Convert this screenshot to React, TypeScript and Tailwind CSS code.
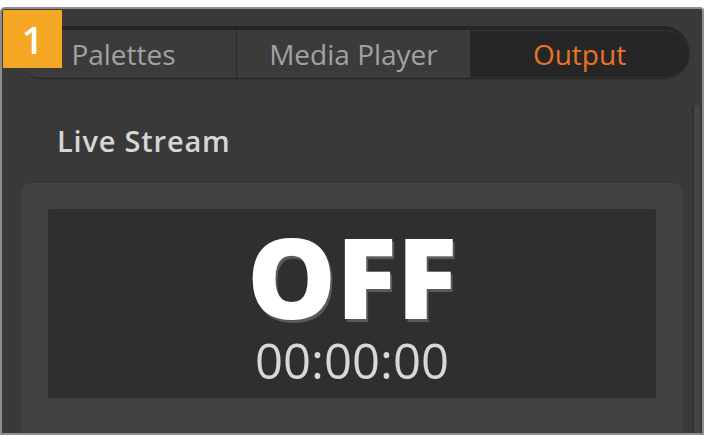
export default function App() {
  const font = { fontFamily: '"Open Sans", "Noto Sans", sans-serif' };

  return (
    <div className="w-[704px] h-[437px] bg-white pt-[7px]" style={font}>
      {/* Window */}
      <div className="relative w-[704px] h-[428px] border-2 border-[#8e8e8e] rounded-tl-[5px] rounded-tr-[4px] bg-[#393939] overflow-hidden flex flex-col">
        {/* Step badge */}
        <div className="absolute left-[1px] top-[1px] w-[59px] h-[58px] bg-[#f5a623] flex items-center justify-center z-10">
          <span className="text-white text-[38px] leading-none font-semibold">1</span>
        </div>

        {/* Tab bar */}
        <div className="mt-[17px] ml-[15px] w-[673px] h-[53px] rounded-full bg-[#252525] pt-[4px] pb-[1px] flex shadow-[0_1px_0_#333]">
          <div className="w-[219px] rounded-l-full bg-[#3b3b3b] flex items-center justify-center text-[28px] text-[#a2a2a2] leading-none">
            <span className="pr-[6px]">Palettes</span>
          </div>
          <div className="w-[234px] border-l border-[#2a2a2a] bg-[#3b3b3b] flex items-center justify-center text-[28px] text-[#a2a2a2] leading-none">
            Media Player
          </div>
          <div className="flex-1 rounded-r-full bg-[#262626] border border-l-0 border-[#333333] flex items-center justify-center text-[28px] text-[#e8722a] leading-none">
            Output
          </div>
        </div>

        <div className="flex flex-1">
          {/* Main content */}
          <div className="flex-1 flex flex-col">
            <div className="mt-[48px] ml-[55px] text-[29px] leading-[28px] font-semibold tracking-[0.8px] text-[#d6d6d6]">
              Live Stream
            </div>

            <div className="mt-[27px] ml-[18px] w-[664px] flex-1 rounded-t-[8px] bg-[#414141] border border-b-0 border-[#363636] pt-[26px] px-[27px]">
              <div className="h-[189px] rounded-[3px] bg-[#2f2f2f] flex flex-col items-center pt-[22px]">
                <div className="text-[112px] leading-[90px] font-extrabold text-white [text-shadow:2px_3px_0_#5a5a5a]">
                  OFF
                </div>
                <div className="mt-[15px] text-[49px] leading-none font-normal text-[#d8d8d8]">
                  00:00:00
                </div>
              </div>
            </div>
          </div>

          {/* Scrollbar strip */}
          <div className="w-[14px] flex pl-[4px] pr-[2px] pt-[26px]">
            <div className="flex-1 rounded-t-[3px] bg-[#444444] border-l-[2px] border-[#303030]" />
          </div>
        </div>
      </div>
    </div>
  );
}
